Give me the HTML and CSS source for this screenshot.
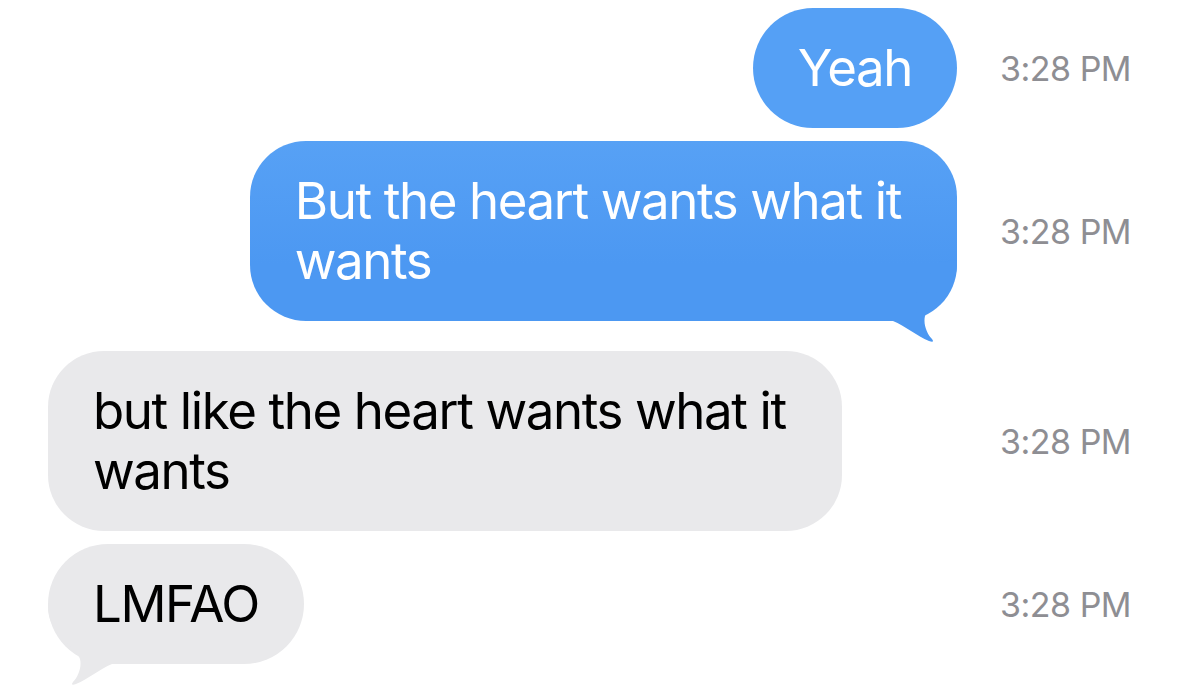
FILE: index.html
```html
<!DOCTYPE html>
<html lang="en">
<head>
<meta charset="utf-8">
<title>Messages</title>
<link rel="stylesheet" href="styles.css">
</head>
<body>
<main class="thread">
  <div class="row">
    <div class="cell cell-sent">
      <div class="bubble bubble-sent"><span class="text">Yeah</span></div>
    </div>
    <div class="time">3:28 PM</div>
  </div>
  <div class="row row-tail">
    <div class="cell cell-sent">
      <div class="bubble bubble-sent bubble-multi bubble-grad"><span class="text">But the heart wants what it<br>wants</span>
        <svg class="tail tail-sent" viewBox="0 0 80 90" width="80" height="90" aria-hidden="true"><path d="M80 8 L80 12 C80 40 52 50 48 64 C46 72 50 82 55 87 Q58 91 52 89 C40 84 28 74 16 69 L16 66 L34 48 L62 10 Z"/></svg>
      </div>
    </div>
    <div class="time">3:28 PM</div>
  </div>
  <div class="row">
    <div class="cell">
      <div class="bubble bubble-recv bubble-multi"><span class="text">but like the heart wants what it<br>wants</span></div>
    </div>
    <div class="time">3:28 PM</div>
  </div>
  <div class="row">
    <div class="cell">
      <div class="bubble bubble-recv"><span class="text">LMFAO</span>
        <svg class="tail tail-recv" viewBox="0 0 80 90" width="80" height="90" aria-hidden="true"><path d="M0 8 L0 12 C0 40 28 50 32 64 C34 72 30 82 25 87 Q22 91 28 89 C40 84 52 74 64 69 L64 66 L46 48 L18 10 Z"/></svg>
      </div>
    </div>
    <div class="time">3:28 PM</div>
  </div>
</main>
</body>
</html>
```

FILE: styles.css
```css
html, body {
  margin: 0;
  padding: 0;
  background: #ffffff;
}

body {
  font-family: "Inter", "Liberation Sans", sans-serif;
  min-height: 689px;
}

.thread {
  padding: 8px 0 25px;
  display: flex;
  flex-direction: column;
  gap: 13px;
}

.row {
  display: grid;
  grid-template-columns: 1fr 179px;
  align-items: center;
}

.row-tail {
  margin-bottom: 17px;
}

.cell {
  display: flex;
  justify-content: flex-start;
  padding: 0 43px 0 48px;
}

.cell-sent {
  justify-content: flex-end;
}

.bubble {
  position: relative;
  padding: 30px 45px;
  font-size: 51px;
  line-height: 60px;
  letter-spacing: -1.4px;
  border-radius: 60px;
  white-space: nowrap;
}

.text {
  position: relative;
  z-index: 1;
}

.bubble-multi {
  padding-right: 56px;
  border-radius: 56px;
}

.bubble-sent {
  background: #55a0f5;
  color: #ffffff;
}

.bubble-grad {
  background: linear-gradient(#57a1f5, #4c98f2 68%);
}

.bubble-recv {
  background: #e9e9eb;
  color: #000000;
}

.tail {
  position: absolute;
  bottom: -21px;
  width: 80px;
  height: 90px;
}

.tail-sent {
  right: 0;
  fill: #4c98f2;
}

.tail-recv {
  left: 0;
  fill: #e9e9eb;
}

.time {
  font-size: 34px;
  color: #8e8e93;
  letter-spacing: -0.5px;
  white-space: nowrap;
}
```
